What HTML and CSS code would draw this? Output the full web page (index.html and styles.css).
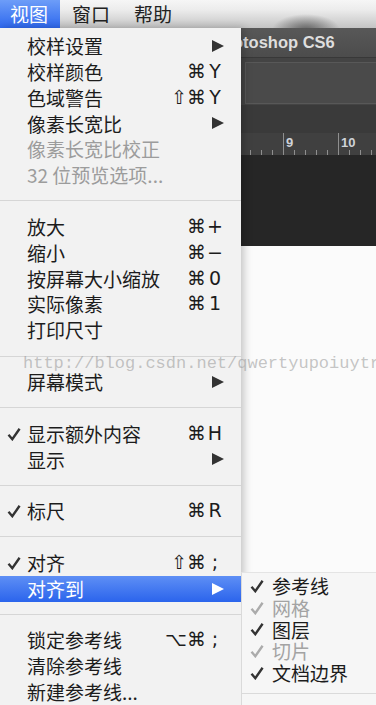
FILE: index.html
```html
<!DOCTYPE html>
<html lang="zh-CN">
<head>
    <meta charset="UTF-8">
    <meta name="viewport" content="width=device-width, initial-scale=1.0">
    <title>视图菜单 - Photoshop CS6</title>
    <link rel="stylesheet" href="styles.css">
</head>
<body>
    <!-- Top menu bar -->
    <div class="menubar">
        <span class="menubar-item active">视图</span>
        <span class="menubar-item">窗口</span>
        <span class="menubar-item">帮助</span>
    </div>

    <!-- Photoshop window behind the menu -->
    <div class="desktop">
        <div class="ps-window">
            <div class="ps-title">Adobe Photoshop CS6</div>
            <div class="ps-options"><div class="ps-options-box"></div></div>
            <div class="ps-tabs"></div>
            <div class="ps-ruler">
                <svg width="376" height="22" viewBox="0 0 376 22">
                    <g stroke="#8f8f8f" stroke-width="1">
                        <line x1="228.5" y1="17" x2="228.5" y2="22"/>
                        <line x1="239.5" y1="17" x2="239.5" y2="22"/>
                        <line x1="250.5" y1="17" x2="250.5" y2="22"/>
                        <line x1="261.5" y1="17" x2="261.5" y2="22"/>
                        <line x1="272.5" y1="17" x2="272.5" y2="22"/>
                        <line x1="283.5" y1="0" x2="283.5" y2="22"/>
                        <line x1="294.5" y1="17" x2="294.5" y2="22"/>
                        <line x1="305.5" y1="17" x2="305.5" y2="22"/>
                        <line x1="316.5" y1="17" x2="316.5" y2="22"/>
                        <line x1="327.5" y1="17" x2="327.5" y2="22"/>
                        <line x1="338.5" y1="0" x2="338.5" y2="22"/>
                        <line x1="349.5" y1="17" x2="349.5" y2="22"/>
                        <line x1="360.5" y1="17" x2="360.5" y2="22"/>
                        <line x1="371.5" y1="17" x2="371.5" y2="22"/>
                    </g>
                    <text x="286" y="14" class="ruler-num">9</text>
                    <text x="341" y="14" class="ruler-num">10</text>
                </svg>
            </div>
            <div class="ps-canvas"></div>
        </div>
    </div>

    <!-- View menu -->
    <div class="menu">
        <div class="item"><span class="check"></span><span class="label">校样设置</span>
            <svg class="arrow" viewBox="0 0 12 12"><polygon points="0,0 12,6 0,12"/></svg></div>
        <div class="item"><span class="check"></span><span class="label">校样颜色</span>
            <span class="sc"><span class="mods">⌘</span><span class="key">Y</span></span></div>
        <div class="item"><span class="check"></span><span class="label">色域警告</span>
            <span class="sc"><span class="mods">⇧⌘</span><span class="key">Y</span></span></div>
        <div class="item"><span class="check"></span><span class="label">像素长宽比</span>
            <svg class="arrow" viewBox="0 0 12 12"><polygon points="0,0 12,6 0,12"/></svg></div>
        <div class="item disabled"><span class="check"></span><span class="label">像素长宽比校正</span></div>
        <div class="item disabled"><span class="check"></span><span class="label">32 位预览选项...</span></div>

        <div class="sep"></div>

        <div class="item"><span class="check"></span><span class="label">放大</span>
            <span class="sc"><span class="mods">⌘</span><span class="key">+</span></span></div>
        <div class="item"><span class="check"></span><span class="label">缩小</span>
            <span class="sc"><span class="mods">⌘</span><span class="key">−</span></span></div>
        <div class="item"><span class="check"></span><span class="label">按屏幕大小缩放</span>
            <span class="sc"><span class="mods">⌘</span><span class="key">0</span></span></div>
        <div class="item"><span class="check"></span><span class="label">实际像素</span>
            <span class="sc"><span class="mods">⌘</span><span class="key">1</span></span></div>
        <div class="item"><span class="check"></span><span class="label">打印尺寸</span></div>

        <div class="sep"></div>

        <div class="item"><span class="check"></span><span class="label">屏幕模式</span>
            <svg class="arrow" viewBox="0 0 12 12"><polygon points="0,0 12,6 0,12"/></svg></div>

        <div class="sep"></div>

        <div class="item"><span class="check"><svg viewBox="0 0 14 14"><path d="M1.5 7.8 L5.3 12.2 L12.6 1.8"/></svg></span><span class="label">显示额外内容</span>
            <span class="sc"><span class="mods">⌘</span><span class="key">H</span></span></div>
        <div class="item"><span class="check"></span><span class="label">显示</span>
            <svg class="arrow" viewBox="0 0 12 12"><polygon points="0,0 12,6 0,12"/></svg></div>

        <div class="sep"></div>

        <div class="item"><span class="check"><svg viewBox="0 0 14 14"><path d="M1.5 7.8 L5.3 12.2 L12.6 1.8"/></svg></span><span class="label">标尺</span>
            <span class="sc"><span class="mods">⌘</span><span class="key">R</span></span></div>

        <div class="sep"></div>

        <div class="item"><span class="check"><svg viewBox="0 0 14 14"><path d="M1.5 7.8 L5.3 12.2 L12.6 1.8"/></svg></span><span class="label">对齐</span>
            <span class="sc"><span class="mods">⇧⌘</span><span class="key">;</span></span></div>
        <div class="item selected"><span class="check"></span><span class="label">对齐到</span>
            <svg class="arrow" viewBox="0 0 12 12"><polygon points="0,0 12,6 0,12"/></svg></div>

        <div class="sep"></div>

        <div class="item"><span class="check"></span><span class="label">锁定参考线</span>
            <span class="sc"><span class="mods">⌥⌘</span><span class="key">;</span></span></div>
        <div class="item"><span class="check"></span><span class="label">清除参考线</span></div>
        <div class="item"><span class="check"></span><span class="label">新建参考线...</span></div>
    </div>

    <!-- "对齐到" submenu -->
    <div class="submenu">
        <div class="sub-item"><span class="check"><svg viewBox="0 0 14 14"><path d="M1.5 7.8 L5.3 12.2 L12.6 1.8"/></svg></span><span class="sub-label">参考线</span></div>
        <div class="sub-item disabled"><span class="check"><svg viewBox="0 0 14 14"><path d="M1.5 7.8 L5.3 12.2 L12.6 1.8"/></svg></span><span class="sub-label">网格</span></div>
        <div class="sub-item"><span class="check"><svg viewBox="0 0 14 14"><path d="M1.5 7.8 L5.3 12.2 L12.6 1.8"/></svg></span><span class="sub-label">图层</span></div>
        <div class="sub-item disabled"><span class="check"><svg viewBox="0 0 14 14"><path d="M1.5 7.8 L5.3 12.2 L12.6 1.8"/></svg></span><span class="sub-label">切片</span></div>
        <div class="sub-item"><span class="check"><svg viewBox="0 0 14 14"><path d="M1.5 7.8 L5.3 12.2 L12.6 1.8"/></svg></span><span class="sub-label">文档边界</span></div>
        <div class="sub-sep"></div>
    </div>

    <div class="watermark">http://blog.csdn.net/qwertyupoiuytr</div>
</body>
</html>
```

FILE: styles.css
```css
/* General Styles */
* {
    box-sizing: border-box;
}

body {
    margin: 0;
    width: 376px;
    height: 705px;
    overflow: hidden;
    position: relative;
    font-family: "Noto Sans CJK SC", sans-serif;
    background: #fbfbfb;
    color: #1c1c1c;
}

/* Menu bar */
.menubar {
    height: 28px;
    display: flex;
    font-size: 19px;
    line-height: 28px;
    background:
        radial-gradient(ellipse 34px 16px at 306px 30px, rgba(80, 80, 80, 0.85), rgba(80, 80, 80, 0)),
        linear-gradient(#f6f6f6, #ececec 35%, #c4c4c4);
}

.menubar-item {
    padding: 0 12px;
    color: #222;
}

.menubar-item.active {
    padding-left: 10px;
    color: #fff;
    background: linear-gradient(#6d9df8, #2e68ee);
}

/* Photoshop window */
.ps-title {
    height: 30px;
    padding-left: 156px;
    white-space: nowrap;
    color: #dedede;
    font: bold 16.5px/29px "Liberation Sans", sans-serif;
    background: linear-gradient(#585858, #4c4c4c);
    border-bottom: 1px solid #383838;
}

.ps-options {
    height: 47px;
    padding: 4px 0 1px 245px;
    background: #444;
}

.ps-options-box {
    height: 100%;
    background: #4a4a4a;
    border: 1px solid #585858;
    border-right: none;
}

.ps-tabs {
    height: 28px;
    background: #3a3a3a;
}

.ps-ruler {
    height: 22px;
    background: #404040;
}

.ps-ruler svg {
    display: block;
}

.ruler-num {
    font: bold 13px "Liberation Sans", sans-serif;
    fill: #cfd3d8;
}

.ps-canvas {
    height: 91px;
    background: #262626;
}

/* Dropdown menu */
.menu {
    position: absolute;
    top: 28px;
    left: 0;
    width: 241px;
    height: 677px;
    padding-top: 5px;
    background: #f2f2f2;
    box-shadow: 3px 0 8px rgba(0, 0, 0, 0.22);
    font-size: 19px;
    line-height: 25.85px;
}

.item {
    display: flex;
    align-items: center;
    height: 25.85px;
    padding-right: 17px;
    white-space: nowrap;
}

.check {
    flex: none;
    width: 27px;
    padding-left: 7px;
    display: flex;
    align-items: center;
}

.check svg {
    width: 14px;
    height: 14px;
    fill: none;
    stroke: #333;
    stroke-width: 2.4;
}

.label {
    flex: 1;
}

.sc {
    display: flex;
    align-items: center;
    font-family: "DejaVu Sans", sans-serif;
    font-size: 19px;
}

.sc .key {
    width: 18px;
    text-align: center;
}

.arrow {
    width: 12px;
    height: 12px;
    fill: #333;
}

.item.disabled {
    color: #9c9c9c;
}

.item.selected {
    color: #fff;
    background: linear-gradient(#5e8ff5, #2b64ec);
}

.item.selected .arrow {
    fill: #fff;
}

.sep {
    height: 25.85px;
    display: flex;
    align-items: center;
}

.sep::before {
    content: '';
    flex: 1;
    height: 1px;
    background: #d6d6d6;
}

/* Submenu */
.submenu {
    position: absolute;
    top: 572px;
    left: 241px;
    right: 0;
    bottom: 0;
    padding-top: 2px;
    background: #f6f6f6;
    border-left: 1px solid #dadada;
    border-top: 1px solid #e4e4e4;
    font-size: 19px;
    line-height: 21.8px;
}

.sub-item {
    display: flex;
    align-items: center;
    height: 21.8px;
    white-space: nowrap;
}

.sub-item .check {
    width: 30px;
    padding-left: 8px;
}

.sub-label {
    display: block;
    height: 21.8px;
}

.sub-item.disabled {
    color: #a3a3a3;
}

.sub-item.disabled .check svg {
    stroke: #ababab;
}

.sub-sep {
    height: 20px;
    display: flex;
    align-items: center;
}

.sub-sep::before {
    content: '';
    flex: 1;
    height: 1px;
    background: #dadada;
}

/* Watermark */
.watermark {
    position: absolute;
    top: 354px;
    left: 23px;
    white-space: nowrap;
    font: 17px/20px "Liberation Mono", monospace;
    color: rgba(150, 150, 150, 0.55);
    pointer-events: none;
}
```
